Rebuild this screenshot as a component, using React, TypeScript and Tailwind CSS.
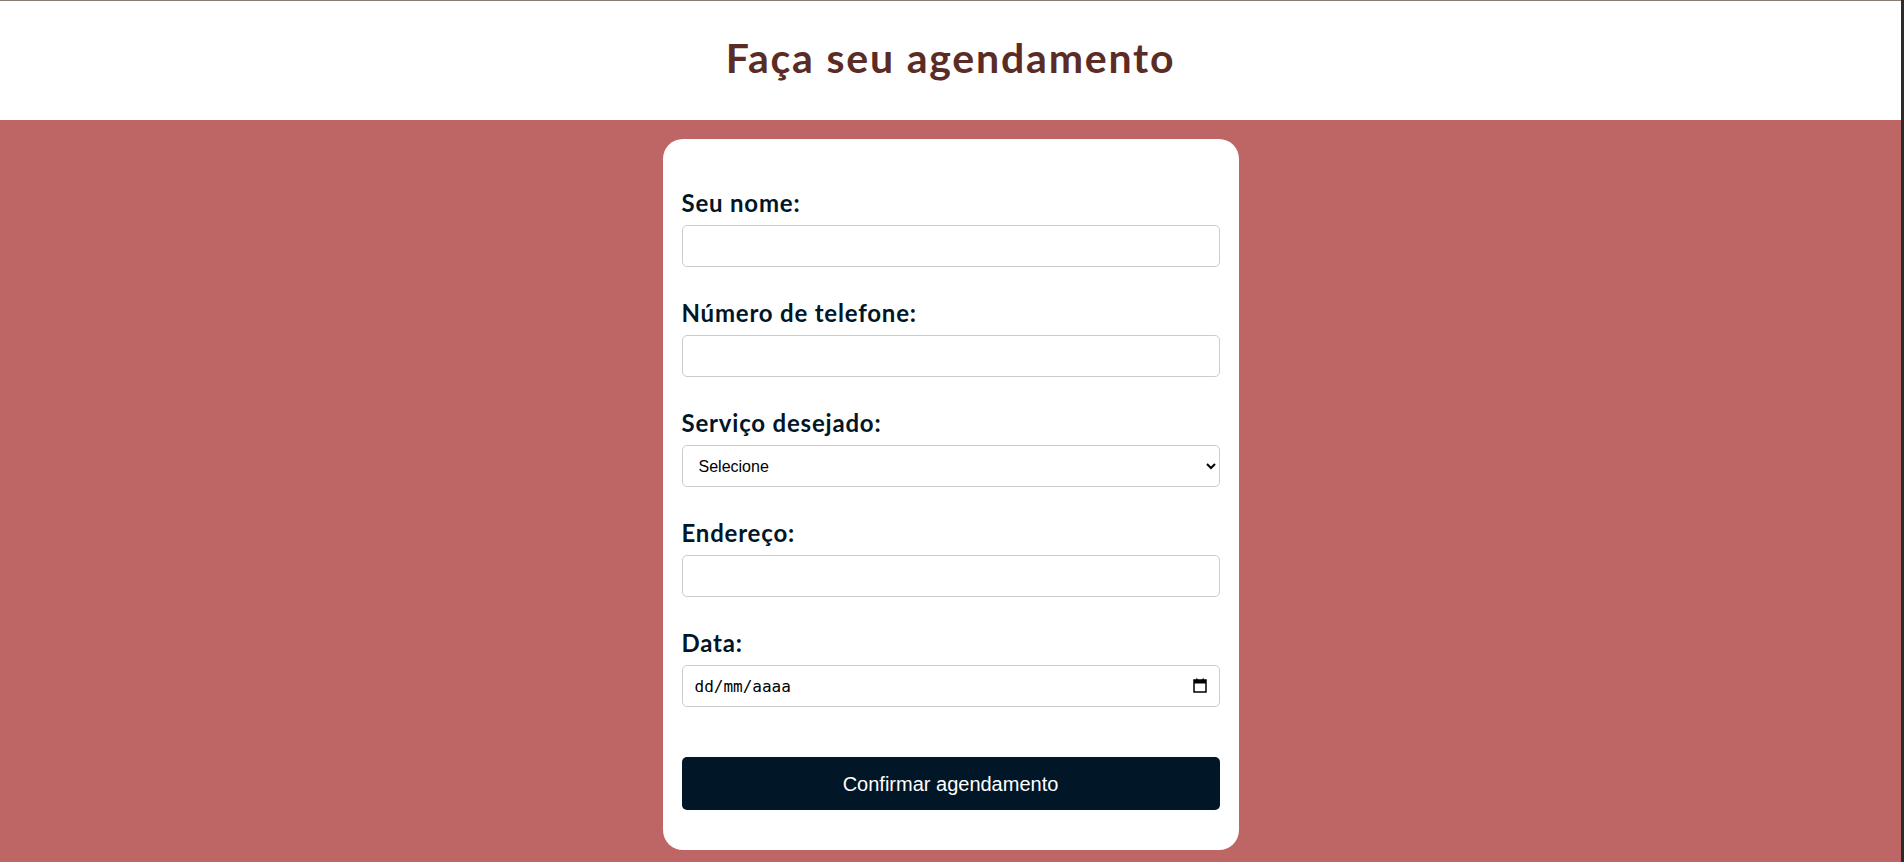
import { ReactNode } from "react";

const labelCls =
    "block text-[24px] leading-[28px] font-bold tracking-[0.8px] text-[#011627] mb-2 font-['Lato',sans-serif]";
const fieldCls =
    "block w-full h-[42px] rounded-[5px] border border-[#cccccc] bg-white text-black";

function Field({ label, children }: { label: string; children: ReactNode }) {
    return (
        <div className="mb-[32px]">
            <label className={labelCls}>{label}</label>
            {children}
        </div>
    );
}

function CalendarIcon() {
    return (
        <svg width="14" height="15" viewBox="0 0 14 15" className="text-black">
            <rect x="1" y="2" width="12" height="12" fill="none" stroke="currentColor" strokeWidth="1.5" />
            <rect x="1" y="2" width="12" height="3.5" fill="currentColor" />
            <rect x="3" y="0.5" width="1.5" height="2" fill="currentColor" />
            <rect x="9.5" y="0.5" width="1.5" height="2" fill="currentColor" />
        </svg>
    );
}

export default function App() {
    return (
        <div className="h-[862px] overflow-hidden flex flex-col border-r-[3px] border-[#2b2b2b] bg-[#be6565]">
            <header className="h-[120px] shrink-0 bg-white border-t border-[#8b7b70] flex items-center justify-center">
                <h1 className="text-[41px] leading-[48px] font-bold text-[#5b2c26] font-['Lato',sans-serif] tracking-[1.8px] -mt-[6px]">
                    Faça seu agendamento
                </h1>
            </header>
            <main className="flex justify-center pt-[19px]">
                <form
                    className="w-[576px] bg-white rounded-[20px] pt-[50px] pb-[40px] px-[19px]"
                    onSubmit={(e) => e.preventDefault()}
                >
                    <Field label="Seu nome:">
                        <input type="text" className={fieldCls} />
                    </Field>
                    <Field label="Número de telefone:">
                        <input type="tel" className={fieldCls} />
                    </Field>
                    <Field label="Serviço desejado:">
                        <select
                            className={`${fieldCls} pl-[12px] pr-[8px] text-[16px] font-['Liberation_Sans',sans-serif]`}
                            defaultValue=""
                        >
                            <option value="">Selecione</option>
                            <option>Corte</option>
                            <option>Escova</option>
                        </select>
                    </Field>
                    <Field label="Endereço:">
                        <input type="text" className={fieldCls} />
                    </Field>
                    <div className="mb-[50px]">
                        <label className={labelCls}>Data:</label>
                        <div className="relative">
                            <input
                                type="text"
                                placeholder="dd/mm/aaaa"
                                className={`${fieldCls} pl-[12px] pr-[36px] text-[16px] placeholder:text-black font-['DejaVu_Sans_Mono',monospace]`}
                            />
                            <span className="absolute right-[13px] top-[13px] pointer-events-none">
                                <CalendarIcon />
                            </span>
                        </div>
                    </div>
                    <button
                        type="submit"
                        className="w-full h-[53px] rounded-[5px] bg-[#011627] text-white text-[20px] font-['Liberation_Sans',sans-serif]"
                    >
                        Confirmar agendamento
                    </button>
                </form>
            </main>
        </div>
    );
}
